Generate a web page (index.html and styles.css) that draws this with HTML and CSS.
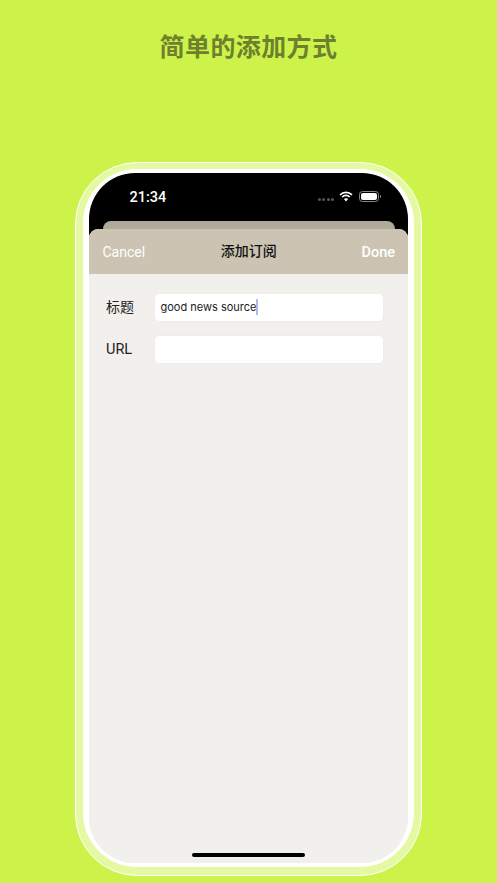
FILE: index.html
```html
<!DOCTYPE html>
<html>
    <head>
        <meta content="text/html;charset=utf-8" http-equiv="Content-Type" />
        <title>添加订阅</title>
        <link rel="stylesheet" href="styles.css">
    </head>
    <body>
        <h1 class="headline">简单的添加方式</h1>
        <div class="phone">
            <div class="phone-rim">
                <div class="screen">
                    <div class="status-bar">
                        <span class="clock">21:34</span>
                        <span class="status-icons">
                            <span class="signal"><i></i><i></i><i></i><i></i></span>
                            <svg class="wifi" width="14" height="11" viewBox="0 0 14 11">
                                <path d="M1 3.8 A8.6 8.6 0 0 1 13 3.8" fill="none" stroke="#fff" stroke-width="1.7"/>
                                <path d="M3.2 6 A5.4 5.4 0 0 1 10.8 6" fill="none" stroke="#fff" stroke-width="1.7"/>
                                <path d="M7 10.6 L4.9 8.1 A3.1 3.1 0 0 1 9.1 8.1 Z" fill="#fff"/>
                            </svg>
                            <span class="battery"><span class="battery-fill"></span></span>
                            <span class="battery-cap"></span>
                        </span>
                    </div>
                    <div class="back-sheet"></div>
                    <div class="sheet">
                        <div class="nav-bar">
                            <span class="nav-cancel">Cancel</span>
                            <span class="nav-title">添加订阅</span>
                            <span class="nav-done">Done</span>
                        </div>
                        <div class="form">
                            <div class="form-row">
                                <span class="form-label form-label-cjk">标题</span>
                                <div class="text-box">good news source<span class="caret"></span></div>
                            </div>
                            <div class="form-row">
                                <span class="form-label">URL</span>
                                <div class="text-box"></div>
                            </div>
                        </div>
                        <div class="home-bar"></div>
                    </div>
                </div>
            </div>
        </div>
    </body>
</html>
```

FILE: styles.css
```css
* {
    box-sizing: border-box;
}

body {
    margin: 0;
    height: 883px;
    overflow: hidden;
    background-color: #cdf34b;
    font-family: Roboto, "Noto Sans CJK SC", sans-serif;
    display: flex;
    flex-direction: column;
    align-items: center;
}

.headline {
    margin: 27px 0 0 0;
    height: 36px;
    line-height: 36px;
    font-size: 25px;
    font-weight: 700;
    letter-spacing: 0.4px;
    color: #6e7f2e;
    font-family: "Noto Sans CJK SC", sans-serif;
}

.phone {
    margin-top: 99px;
    width: 347px;
    height: 714px;
    padding: 6px 7px 8px 7px;
    background-color: #e5f9a2;
    border: 1.5px solid #fff;
    border-radius: 62px;
    display: flex;
}

.phone-rim {
    flex: 1;
    background-color: #fff;
    padding: 4px 6px;
    border-radius: 54px;
    display: flex;
}

/* black only behind the status bar, so no dark edge shows at the bottom corners */
.screen {
    flex: 1;
    background: linear-gradient(#000 70px, #f2f0ec 70px);
    border-radius: 46px;
    overflow: hidden;
    display: flex;
    flex-direction: column;
}

.status-bar {
    height: 48px;
    flex-shrink: 0;
    padding: 0 27px 0 40.5px;
    display: flex;
    justify-content: space-between;
    align-items: center;
    color: #fff;
}

.clock {
    font-size: 14.5px;
    font-weight: 500;
}

.status-icons {
    display: flex;
    align-items: center;
    margin-top: -1px;
}

.signal {
    display: flex;
    gap: 1.5px;
    margin: 6px 5px 0 0;
}

.signal i {
    width: 3px;
    height: 3px;
    border-radius: 50%;
    background-color: #555;
}

.wifi {
    margin-right: 6px;
}

.battery {
    width: 20px;
    height: 11px;
    border: 1px solid #888;
    border-radius: 3.5px;
    padding: 1px;
    display: flex;
}

.battery-fill {
    flex: 1;
    background-color: #fff;
    border-radius: 2px;
}

.battery-cap {
    width: 1px;
    height: 3px;
    margin-left: 1px;
    background-color: #777;
}

.back-sheet {
    height: 8px;
    flex-shrink: 0;
    margin: 0 13px 0 13.5px;
    background-color: #b1a999;
    border-radius: 8px 8px 0 0;
}

.sheet {
    flex: 1;
    background-color: #f2f0ec;
    border-radius: 9px 9px 0 0;
    overflow: hidden;
    display: flex;
    flex-direction: column;
}

.nav-bar {
    height: 45px;
    flex-shrink: 0;
    padding: 0 13px 0 13.5px;
    background-color: #ccc3b2;
    display: flex;
    justify-content: space-between;
    align-items: center;
    font-size: 14.5px;
}

.nav-cancel {
    color: #fff;
    width: 60px;
    font-size: 14px;
    padding-top: 1px;
}

.nav-title {
    color: #111;
    font-weight: 500;
    font-size: 14px;
    padding-bottom: 3px;
}

.nav-done {
    color: #fff;
    font-weight: 500;
    width: 60px;
    text-align: right;
    padding-top: 1px;
}

.form {
    flex: 1;
    padding: 20px 25.5px 0 17px;
    display: flex;
    flex-direction: column;
    gap: 15.5px;
}

.form-row {
    display: flex;
    align-items: center;
}

.form-label {
    width: 48.5px;
    flex-shrink: 0;
    font-size: 14.5px;
    color: #222;
}

.form-label-cjk {
    font-size: 14px;
    padding-bottom: 2px;
}

.text-box {
    flex: 1;
    height: 26.5px;
    padding-left: 6px;
    background-color: #fff;
    border-radius: 4px;
    box-shadow: 0 0 1px rgba(0, 0, 0, 0.12);
    display: flex;
    align-items: center;
    font-family: Inter, sans-serif;
    font-size: 11px;
    color: #222;
}

.caret {
    width: 2px;
    height: 16px;
    background-color: #a9bcec;
}

.home-bar {
    width: 113px;
    height: 4px;
    flex-shrink: 0;
    margin: 0 auto 6px auto;
    background-color: #000;
    border-radius: 2px;
}
```
